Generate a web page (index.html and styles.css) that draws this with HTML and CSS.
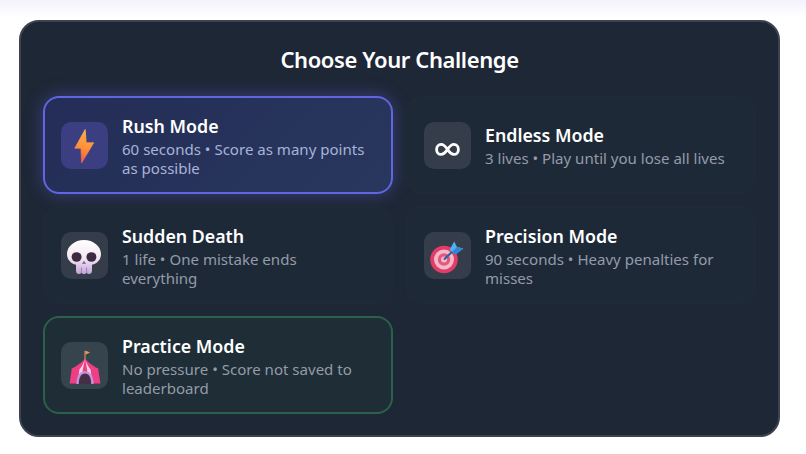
FILE: index.html
```html
<!DOCTYPE html>
<html lang="en">

<head>
    <meta charset="utf-8">
    <title>Choose Your Challenge</title>
    <link rel="stylesheet" href="styles.css">
</head>

<body>
    <div class="top-haze"></div>
    <div class="panel">
        <h2 class="panel-title">Choose Your Challenge</h2>
        <div class="mode-grid">
            <div class="mode-card mode-card-active">
                <div class="mode-icon">
                    <svg width="47" height="47" viewBox="0 0 47 47">
                        <defs>
                            <linearGradient id="bolt" x1="0.6" y1="0" x2="0.4" y2="1">
                                <stop offset="0" stop-color="#ffb347" />
                                <stop offset="0.55" stop-color="#ff8f3a" />
                                <stop offset="1" stop-color="#e8584e" />
                            </linearGradient>
                        </defs>
                        <path d="M24.2 7.5 L13.8 26.2 L20 26.2 L20.6 41 L32.6 20.8 L25.2 20.8 Z" fill="url(#bolt)" stroke="url(#bolt)" stroke-width="0.8" stroke-linejoin="round" />
                    </svg>
                </div>
                <div class="mode-text">
                    <div class="mode-name">Rush Mode</div>
                    <div class="mode-desc">60 seconds • Score as many points as possible</div>
                </div>
            </div>
            <div class="mode-card">
                <div class="mode-icon">
                    <svg width="47" height="47" viewBox="0 0 47 47">
                        <path d="M23.5 27.4 C20.8 23.4 19.2 22.4 17.2 22.4 C14.4 22.4 12.6 24.6 12.6 27.4 C12.6 30.2 14.4 32.4 17.2 32.4 C19.2 32.4 20.8 31.4 23.5 27.4 C26.2 23.4 27.8 22.4 29.8 22.4 C32.6 22.4 34.4 24.6 34.4 27.4 C34.4 30.2 32.6 32.4 29.8 32.4 C27.8 32.4 26.2 31.4 23.5 27.4 Z" fill="none" stroke="#fff" stroke-width="2.8" />
                    </svg>
                </div>
                <div class="mode-text">
                    <div class="mode-name">Endless Mode</div>
                    <div class="mode-desc">3 lives • Play until you lose all lives</div>
                </div>
            </div>
            <div class="mode-card">
                <div class="mode-icon">
                    <svg width="47" height="47" viewBox="0 0 47 47">
                        <defs>
                            <linearGradient id="bone" x1="0" y1="0" x2="0" y2="1">
                                <stop offset="0" stop-color="#ffffff" />
                                <stop offset="0.55" stop-color="#f3e6f1" />
                                <stop offset="1" stop-color="#c2a3d8" />
                            </linearGradient>
                        </defs>
                        <path d="M23 8 C13.5 8 6 14.4 6 22 C6 27.8 10 31.6 15 32.8 L15 39 C15 41 16.4 42 18 42 C19 42 19.8 41.6 20.4 40.8 C21 41.6 22 42 23 42 C24 42 25 41.6 25.6 40.8 C26.2 41.6 27 42 28 42 C29.6 42 31 41 31 39 L31 32.8 C36 31.6 40 27.8 40 22 C40 14.4 32.5 8 23 8 Z" fill="url(#bone)" />
                        <ellipse cx="15.6" cy="25" rx="5" ry="4.8" fill="#3b2a42" />
                        <ellipse cx="30.4" cy="25" rx="5" ry="4.8" fill="#3b2a42" />
                        <path d="M23 28.5 L21 32 L25 32 Z" fill="#8a6f9c" />
                        <path d="M20.4 35.5 V41 M25.6 35.5 V41" stroke="#9d80b5" stroke-width="1" fill="none" />
                    </svg>
                </div>
                <div class="mode-text">
                    <div class="mode-name">Sudden Death</div>
                    <div class="mode-desc">1 life • One mistake ends everything</div>
                </div>
            </div>
            <div class="mode-card">
                <div class="mode-icon">
                    <svg width="47" height="47" viewBox="0 0 47 47">
                        <circle cx="20" cy="27.5" r="13.8" fill="#e23c68" />
                        <circle cx="20" cy="27.5" r="10" fill="#f4b9c9" />
                        <circle cx="20" cy="27.5" r="6.2" fill="#e4587f" />
                        <circle cx="20" cy="27.5" r="3" fill="#f4b9c9" />
                        <path d="M20 27.5 L31 17" stroke="#2a5f9e" stroke-width="2" />
                        <path d="M25.6 17.8 L30.2 9.6 L33 15 L39.4 16.6 L31.4 22.6 Z" fill="#55aef0" />
                        <path d="M28 20 L33 15 L39.4 16.6 L31.4 22.6 Z" fill="#2e86d4" />
                    </svg>
                </div>
                <div class="mode-text">
                    <div class="mode-name">Precision Mode</div>
                    <div class="mode-desc">90 seconds • Heavy penalties for misses</div>
                </div>
            </div>
            <div class="mode-card mode-card-practice">
                <div class="mode-icon">
                    <svg width="47" height="47" viewBox="0 0 47 47">
                        <path d="M24 18 V9" stroke="#c98d62" stroke-width="1.2" />
                        <path d="M24.4 8.6 L29 10.6 L24.4 12.8 Z" fill="#f0935a" />
                        <path d="M24 16.5 C20.5 21 14.5 24.8 10.8 26.6 L8.6 41.6 L39.4 41.6 L37.2 26.6 C33.5 24.8 27.5 21 24 16.5 Z" fill="#ee3f85" />
                        <path d="M24 16.5 C23 20.5 21 24.2 18.4 27.6 L16.6 41.6 L21 41.6 L21.8 27.8 Z" fill="#f9d3e3" />
                        <path d="M24 16.5 C25 20.5 27 24.2 29.6 27.6 L31.4 41.6 L27 41.6 L26.2 27.8 Z" fill="#f9d3e3" />
                        <path d="M15.4 42 C15.4 33.6 18.8 29.2 24 29.2 C29.2 29.2 32.6 33.6 32.6 42 Z" fill="#c792da" />
                        <path d="M17.8 42 C17.8 35.6 20.2 31.6 24 31.6 C27.8 31.6 30.2 35.6 30.2 42 Z" fill="#433048" />
                    </svg>
                </div>
                <div class="mode-text">
                    <div class="mode-name">Practice Mode</div>
                    <div class="mode-desc">No pressure • Score not saved to leaderboard</div>
                </div>
            </div>
        </div>
    </div>
</body>

</html>
```

FILE: styles.css
```css
* {
    box-sizing: border-box;
}

html,
body {
    height: 100%;
}

body {
    margin: 0;
    padding: 20px 26px 0 19px;
    background-color: #ffffff;
    font-family: "Noto Sans", "Open Sans", sans-serif;
    overflow: hidden;
}

.top-haze {
    position: absolute;
    top: 0;
    left: 0;
    right: 0;
    height: 18px;
    background: linear-gradient(to bottom, #f4f2fd, #ffffff);
}

.panel {
    position: relative;
    width: 761px;
    height: 417px;
    padding: 22px 22px;
    background-color: #1e2735;
    border: 2px solid #3b4250;
    border-radius: 20px;
}

.panel-title {
    margin: 0 0 21px 0;
    color: #ffffff;
    font-size: 22px;
    font-weight: 600;
    letter-spacing: -0.4px;
    line-height: 31px;
    text-align: center;
}

.mode-grid {
    display: grid;
    grid-template-columns: 350px 350px;
    grid-auto-rows: 98px;
    column-gap: 13px;
    row-gap: 12px;
}

.mode-card {
    display: flex;
    align-items: center;
    gap: 14px;
    padding: 0 16px;
    background-color: #1e2938;
    border: 2px solid #1f2a39;
    border-radius: 16px;
}

.mode-card-active {
    background: linear-gradient(135deg, #242d57, #28375e);
    border-color: #6265e0;
    box-shadow: 0 0 18px rgba(99, 102, 241, 0.4);
}

.mode-card-practice {
    background-color: #1e2d36;
    border-color: #2a6148;
}

.mode-icon {
    display: flex;
    flex-shrink: 0;
    align-items: center;
    justify-content: center;
    width: 47px;
    height: 47px;
    background-color: #353c4a;
    border-radius: 10px;
}

.mode-card-active .mode-icon {
    background-color: #3b3f82;
}

.mode-card-practice .mode-icon {
    background-color: #36444d;
}

.mode-text {
    padding-top: 1px;
}

.mode-name {
    margin-bottom: 2px;
    color: #ffffff;
    font-size: 17.8px;
    font-weight: 600;
    line-height: 24px;
}

.mode-desc {
    color: #949ba8;
    font-size: 15.05px;
    line-height: 19px;
}

.mode-card-active .mode-desc {
    color: #a8b3d8;
}
```
